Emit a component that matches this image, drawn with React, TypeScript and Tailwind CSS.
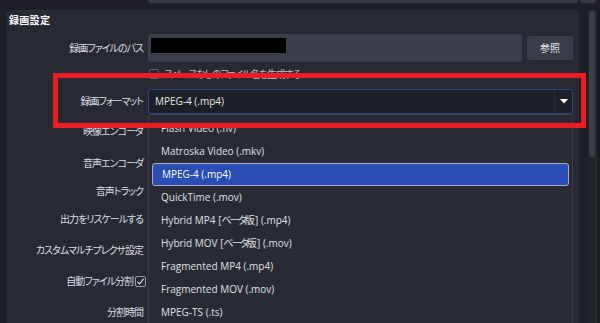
import React from "react";

const labelRows = [
  { label: "映像エンコーダ", h: "h-[34px]" },
  { label: "音声エンコーダ", h: "h-[30px]" },
  { label: "音声トラック", h: "h-[27px]" },
  { label: "出力をリスケールする", h: "h-[29px]" },
  { label: "カスタムマルチプレクサ設定", h: "h-[32px]" },
  { label: "自動ファイル分割", h: "h-[30px]", check: true },
  { label: "分割時間", h: "h-[32px]" },
];

const formats = [
  { name: "Flash Video (.flv)" },
  { name: "Matroska Video (.mkv)" },
  { name: "MPEG-4 (.mp4)", selected: true },
  { name: "QuickTime (.mov)" },
  { name: "Hybrid MP4 ", beta: true, ext: " (.mp4)" },
  { name: "Hybrid MOV ", beta: true, ext: " (.mov)" },
  { name: "Fragmented MP4 (.mp4)" },
  { name: "Fragmented MOV (.mov)" },
  { name: "MPEG-TS (.ts)" },
];

export default function App() {
  return (
    <div className="w-[600px] h-[323px] overflow-hidden bg-[#1e1f26] flex flex-col font-['Open_Sans','Noto_Sans_CJK_JP',sans-serif] [font-feature-settings:'palt'] text-[10px] text-[#dcdee3]">
      {/* bottom of the previous settings row */}
      <div className="h-[10px] shrink-0 flex">
        <div className="ml-[148px] w-[430px] h-[3px] bg-[#393c48] rounded-b-[3px]" />
        <div className="ml-[2px] w-[16px] h-[3px] bg-[#393c48] rounded-b-[3px]" />
      </div>

      <div className="flex flex-1 min-h-0">
        <div className="w-[588px] shrink-0">
          {/* 録画設定 group */}
          <div className="ml-[6px] w-[573px] h-[320px] bg-[#272a33] rounded-t-[4px] relative">
            <div className="h-[20px] flex items-center pl-[3px] font-bold text-white tracking-[0.3px]">録画設定</div>

            <div className="mt-[4px] h-[28px] flex items-center">
              <div className="w-[137px] text-right tracking-[-1px]">録画ファイルのパス</div>
              <div className="ml-[5px] w-[374px] h-full bg-[#3b3e4b] rounded-[3px] pl-[3px] pt-[4px]">
                <div className="w-[135px] h-[15px] bg-black" />
              </div>
              <div className="ml-[5px] w-[46px] h-[24px] bg-[#393c49] rounded-[3px] flex items-center justify-center text-[#e4e6ea]">
                参照
              </div>
            </div>

            <div className="h-[24px] flex items-center">
              <div className="ml-[143px] w-[10px] h-[10px] border border-[#5c5f6b] rounded-[2px]" />
              <div className="ml-[5px] text-[#bfc1c8] tracking-[-1.2px]">スペースなしのファイル名を生成する</div>
            </div>

            <div className="mt-[3px] h-[25px] flex items-center">
              <div className="w-[137px] text-right tracking-[-1px]">録画フォーマット</div>
              <div className="ml-[5px] w-[425px] h-full bg-[#1d1f27] border border-[#2c4488] rounded-[3px] flex items-center">
                <div className="flex-1 pl-[6px] text-[#e6e8ec]">MPEG-4 (.mp4)</div>
                <div className="w-[18px] h-full border-l border-[#2a2c35] flex items-center justify-center">
                  <svg width="8" height="5" viewBox="0 0 8 5">
                    <polygon points="0,0 8,0 4,4.5" fill="#ffffff" />
                  </svg>
                </div>
              </div>
            </div>

            {labelRows.map((r) => (
              <div key={r.label} className={`${r.h} flex items-center`}>
                {r.check ? (
                  <div className="w-[140px] flex items-center justify-end gap-[2px]">
                    <span className="tracking-[-1px]">{r.label}</span>
                    <div className="w-[11px] h-[11px] border border-[#9a9ca6] rounded-[2px] flex items-center justify-center">
                      <svg width="9" height="9" viewBox="0 0 9 9">
                        <polyline points="1.5,4.8 3.6,7 7.6,1.8" fill="none" stroke="#e8e9ec" strokeWidth="1.1" />
                      </svg>
                    </div>
                  </div>
                ) : (
                  <div className="w-[137px] text-right tracking-[-1px]">{r.label}</div>
                )}
              </div>
            ))}

            {/* open format list */}
            <div className="absolute left-[142px] top-[104px] w-[425px] h-[230px] bg-[#292b34] border border-[#3a3d49] rounded-[3px] pt-[2px] px-[3px]">
              {formats.map((f) => (
                <div
                  key={f.name + (f.ext ?? "")}
                  className={`h-[23px] flex items-center pl-[9px] rounded-[3px] whitespace-pre ${
                    f.selected ? "bg-[#2a4db6] border border-[#a9acb6] text-white" : "text-[#dfe1e6]"
                  }`}
                >
                  {f.name}
                  {f.beta && (
                    <>
                      [<span className="tracking-[-1.8px] pr-[2px]">ベータ版</span>]{f.ext}
                    </>
                  )}
                </div>
              ))}
            </div>

            {/* highlight frame */}
            <div className="absolute left-[47px] top-[63px] w-[533px] h-[55px] border-[5px] border-[#ed1c24]" />
          </div>
        </div>

        {/* scrollbar */}
        <div className="w-[8px] shrink-0 bg-[#22242c] pt-[1px] flex justify-center">
          <div className="w-[6px] h-[146px] bg-[#3c3f4b] rounded-full" />
        </div>
        <div className="w-[4px] shrink-0 bg-[#1a1b21] border-l border-[#2a2c34]" />
      </div>
    </div>
  );
}
